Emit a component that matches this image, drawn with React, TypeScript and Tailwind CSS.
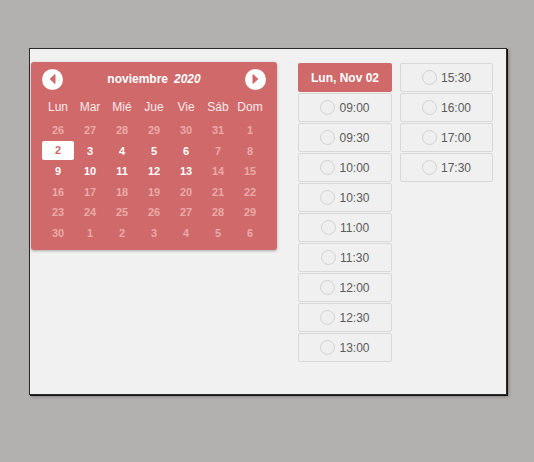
type Day = { n: number; state: "off" | "on" | "sel" };

const weekdays = ["Lun", "Mar", "Mié", "Jue", "Vie", "Sáb", "Dom"];

// November 2020, weeks starting on Monday
const days: Day[] = [
  ...[26, 27, 28, 29, 30, 31, 1].map((n) => ({ n, state: "off" as const })),
  { n: 2, state: "sel" },
  ...[3, 4, 5, 6].map((n) => ({ n, state: "on" as const })),
  ...[7, 8].map((n) => ({ n, state: "off" as const })),
  ...[9, 10, 11, 12, 13].map((n) => ({ n, state: "on" as const })),
  ...[14, 15, 16, 17, 18, 19, 20, 21, 22, 23, 24, 25, 26, 27, 28, 29, 30, 1, 2, 3, 4, 5, 6].map((n) => ({
    n,
    state: "off" as const,
  })),
];

const morning = ["09:00", "09:30", "10:00", "10:30", "11:00", "11:30", "12:00", "12:30", "13:00"];
const afternoon = ["15:30", "16:00", "17:00", "17:30"];

function NavButton({ dir }: { dir: "prev" | "next" }) {
  return (
    <button className="flex h-[21px] w-[21px] items-center justify-center rounded-full bg-white">
      <svg width="8" height="10" viewBox="0 0 8 10" className={dir === "next" ? "rotate-180" : ""}>
        <polygon points="6,0.5 6,9.5 1.2,5" fill="#d0696a" stroke="#d0696a" strokeWidth="1" strokeLinejoin="round" />
      </svg>
    </button>
  );
}

function Slot({ time }: { time: string }) {
  return (
    <button className="mb-[1px] flex h-[29px] w-full items-center justify-center gap-[4px] rounded-[2px] border border-[#d8d8d8] bg-[#f0f0f0] text-[12px] text-[#5a5a5a]">
      <span className="h-[15px] w-[15px] rounded-full border border-[#d2d2d2] bg-[#efefef]" />
      <span>{time}</span>
    </button>
  );
}

export default function App() {
  return (
    <div
      className="min-h-[462px] w-full bg-[#b2b1af] pl-[29px] pt-[48px]"
      style={{ fontFamily: '"Liberation Sans", Arial, sans-serif' }}
    >
      <div className="h-[347px] w-[478px] border border-[#2b2b2b] bg-[#f1f1f1] shadow-[1px_1px_0_#111,2px_2px_3px_rgba(0,0,0,0.25)]">
        <div className="flex items-start pl-[1px] pt-[13px]">
          {/* calendar */}
          <div className="w-[246px] rounded-[3px] bg-[#d0696a] px-[11px] pb-[7px] pt-[6px] shadow-[0_1px_3px_rgba(0,0,0,0.3)]">
            <div className="flex h-[22px] items-center justify-between">
              <NavButton dir="prev" />
              <div className="flex gap-[6px] text-[12px] font-bold text-white">
                <span>noviembre</span>
                <span className="italic">2020</span>
              </div>
              <NavButton dir="next" />
            </div>
            <div className="mt-[7px] grid h-[20px] grid-cols-7 items-center text-center text-[12px] text-[#fbeaea]">
              {weekdays.map((d) => (
                <span key={d}>{d}</span>
              ))}
            </div>
            <div className="mt-[3px] grid grid-cols-7 text-center text-[11px] font-bold">
              {days.map((d, i) => (
                <div key={i} className="flex h-[20.5px] items-start justify-center">
                  {d.state === "sel" ? (
                    <span className="flex h-[19px] w-[32px] items-center justify-center rounded-[2px] bg-white text-[#d0696a]">
                      {d.n}
                    </span>
                  ) : (
                    <span
                      className={
                        "flex h-[20.5px] items-center " + (d.state === "on" ? "text-white" : "text-[#e9a9a8]")
                      }
                    >
                      {d.n}
                    </span>
                  )}
                </div>
              ))}
            </div>
          </div>

          {/* time slots */}
          <div className="ml-[21px] flex gap-[8px] pt-[1px]">
            <div className="flex w-[94px] flex-col">
              <div className="mb-[1px] flex h-[29px] items-center justify-center rounded-[2px] bg-[#d0696a] text-[12px] font-bold text-white">
                Lun, Nov 02
              </div>
              {morning.map((t) => (
                <Slot key={t} time={t} />
              ))}
            </div>
            <div className="flex w-[93px] flex-col">
              {afternoon.map((t) => (
                <Slot key={t} time={t} />
              ))}
            </div>
          </div>
        </div>
      </div>
    </div>
  );
}
